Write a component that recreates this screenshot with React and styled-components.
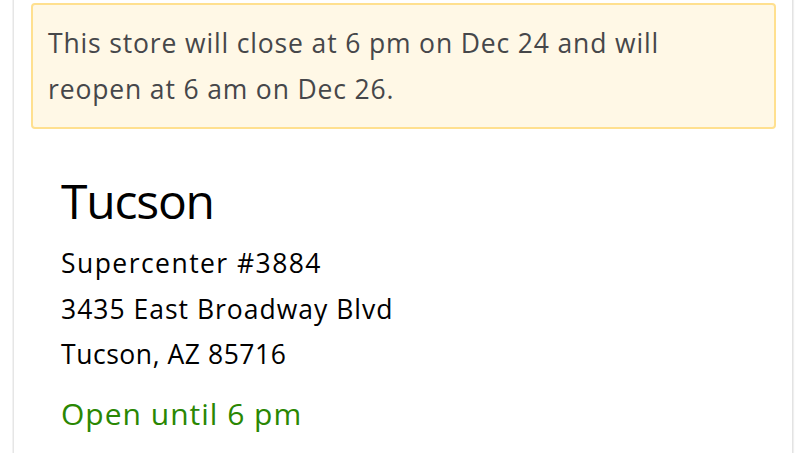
import React from "react";
import styled, { createGlobalStyle } from "styled-components";

const Global = createGlobalStyle`
  html, body { margin: 0; padding: 0; background: #fff; }
  body { font-family: "Open Sans", "Noto Sans", sans-serif; }
`;

const Page = styled.div`
  padding: 0 12px 0 14px;
  height: 453px;
  overflow: hidden;
`;

const Card = styled.section`
  background: #fff;
  box-shadow: -1px 0 0 #e6e6e6, -2px 0 0 #f2f2f2, 1px 0 0 #e3e3e3, 2px 0 1px #efefef;
  padding: 3px 16px 0 17px;
  min-height: 460px;
`;

const Notice = styled.div`
  background: #fff8e6;
  border: 2px solid #ffe08f;
  border-radius: 4px;
  padding: 15px 60px 15px 15px;
  font-size: 26.5px;
  line-height: 46px;
  letter-spacing: 0.85px;
  color: #46474a;
`;

const Store = styled.div`
  padding: 40px 0 0 30px;
  color: #000;
`;

const Title = styled.h1`
  margin: 0 0 8px;
  font-weight: 400;
  font-size: 48px;
  line-height: 64px;
  letter-spacing: -1.2px;
`;

const Line = styled.div`
  font-size: 26.5px;
  line-height: 45.5px;
  letter-spacing: ${(p) => p.$spacing || 1.05}px;
`;

const Status = styled.div`
  margin-top: 13px;
  font-size: 30px;
  line-height: 46px;
  letter-spacing: 1px;
  color: #2a8703;
`;

export default function App() {
  return (
    <>
      <Global />
      <Page>
        <Card>
          <Notice>
            This store will close at 6 pm on Dec 24 and will reopen at 6 am on Dec 26.
          </Notice>
          <Store>
            <Title>Tucson</Title>
            <Line $spacing={1.45}>Supercenter #3884</Line>
            <Line $spacing={1}>3435 East Broadway Blvd</Line>
            <Line $spacing={0.55}>Tucson, AZ 85716</Line>
            <Status>Open until 6 pm</Status>
          </Store>
        </Card>
      </Page>
    </>
  );
}
